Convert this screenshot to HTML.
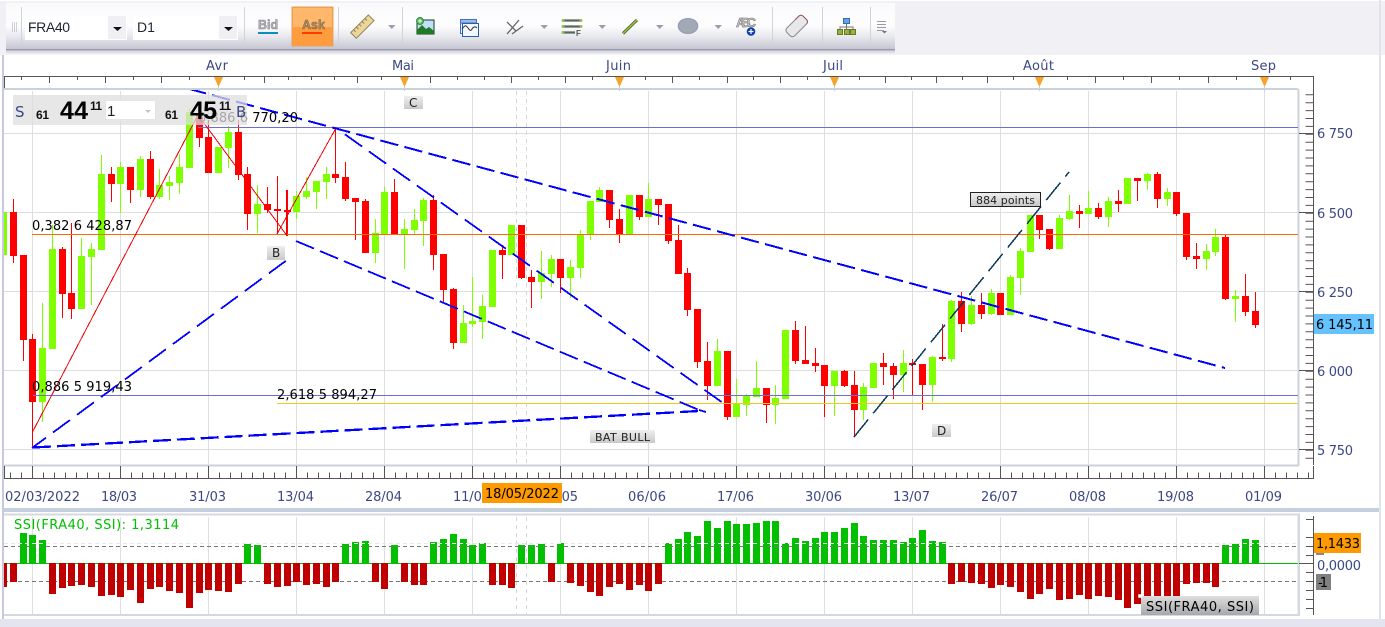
<!DOCTYPE html>
<html><head><meta charset="utf-8"><title>FRA40 D1</title>
<style>
html,body{margin:0;padding:0;background:#fff;width:1385px;height:627px;overflow:hidden}
svg{display:block}
text{font-family:"DejaVu Sans","Liberation Sans",sans-serif;font-size:13px;fill:#000}
.ax{fill:#3c4784}
.lb{font-size:10.5px;fill:#222}
</style></head><body>
<svg width="1385" height="627" viewBox="0 0 1385 627" xmlns="http://www.w3.org/2000/svg">
<defs>
<linearGradient id="tb" x1="0" y1="0" x2="0" y2="1"><stop offset="0" stop-color="#fafafc"/><stop offset=".5" stop-color="#fdfdfe"/><stop offset=".72" stop-color="#e9e9ef"/><stop offset="1" stop-color="#c6c6d2"/></linearGradient>
<linearGradient id="tag" x1="0" y1="0" x2="0" y2="1"><stop offset="0" stop-color="#efefef"/><stop offset="1" stop-color="#c8c8c8"/></linearGradient>
<linearGradient id="tip" x1="0" y1="0" x2="0" y2="1"><stop offset="0" stop-color="#dedede"/><stop offset="1" stop-color="#a8a8a8"/></linearGradient>
<clipPath id="plot"><rect x="4" y="90" width="1294" height="375"/></clipPath>
</defs>

<!-- page frame -->
<rect width="1385" height="627" fill="#fff"/>
<rect width="1385" height="55" fill="#f0f0f5"/>
<rect y="0" width="1385" height="1" fill="#fff"/>
<rect x="2" y="55" width="2" height="564" fill="#c8c8e0"/>
<rect x="0" y="619" width="1385" height="8" fill="#e4e4f0"/>
<rect x="1379" y="0" width="2" height="619" fill="#e2e2ea"/>
<rect x="4" y="508" width="1375" height="4" fill="#c5d0de"/>

<!-- toolbar -->
<rect x="6" y="50" width="889" height="3" fill="#dcdce4"/>
<rect x="6" y="3" width="889" height="46" fill="url(#tb)"/>
<rect x="6" y="49" width="889" height="1.5" fill="#9a9aac"/>
<path d="M12.5 22V32M14.5 22V32M16.5 22V32" stroke="#cfcfd8" stroke-width="1"/>
<path d="M21.5 7V46M244.5 7V46M338.5 7V46M402.5 7V46M772.5 7V46M822.5 7V46M870.5 7V46" stroke="#d2d2dc"/>
<rect x="25" y="16" width="102" height="24" fill="#fff"/>
<rect x="108" y="16" width="18" height="23" fill="#f0f0f4"/>
<path d="M113 27h9l-4.500 4z" fill="#111"/>
<text x="28" y="32" textLength="42" style="font-family:'Liberation Sans',sans-serif;font-size:14px;fill:#1c2430">FRA40</text>
<rect x="133" y="16" width="105" height="24" fill="#fff"/>
<rect x="219" y="16" width="18" height="23" fill="#f0f0f4"/>
<path d="M224 27h9l-4.500 4z" fill="#111"/>
<text x="137" y="32" style="font-family:'Liberation Sans',sans-serif;font-size:14px;fill:#1c2430">D1</text>
<text x="258" y="29" style="font-family:'Liberation Sans',sans-serif;font-size:12.500px;font-weight:bold;fill:#b4b4b8;stroke:#808088;stroke-width:.5">Bid</text>
<rect x="258" y="32" width="20" height="2" fill="#0b8cc4"/>
<rect x="292" y="7" width="41" height="39" fill="#ff9c3e" stroke="#e6a060"/>
<rect x="293" y="8" width="39" height="19" fill="#ffb76c"/>
<text x="302" y="29" style="font-family:'Liberation Sans',sans-serif;font-size:12.500px;font-weight:bold;fill:#b08a60;stroke:#7d6648;stroke-width:.5">Ask</text>
<rect x="302" y="32" width="20" height="2" fill="#ff3c00"/>
<!-- ruler icon -->
<g transform="rotate(-45 362 27)"><rect x="350" y="23" width="25" height="8" fill="#ecd69a" stroke="#8f8258"/><path d="M354 23v3M358 23v3M362 23v3M366 23v3M370 23v3" stroke="#8f8258"/></g>
<g fill="#9c9cb0"><path d="M388 25h7.500l-3.750 4zM540.500 25h7.500l-3.750 4zM598.500 25h7.500l-3.750 4zM656 25h7.500l-3.750 4zM714.500 25h7.500l-3.750 4z"/></g>
<!-- image icon -->
<rect x="417" y="20" width="17" height="14" fill="#bfe0f8" stroke="#123a22"/>
<path d="M417 34v-4l5-5 4 4 3-2 5 4v3z" fill="#1f7a28"/>
<circle cx="420" cy="21" r="3.600" fill="#5cb85c" stroke="#2a7a3a" stroke-width=".7"/>
<path d="M418.200 21h3.600M420 19.200v3.600" stroke="#fff"/>
<!-- window icon -->
<rect x="460.500" y="19.500" width="16" height="14" fill="#e8f0fb" stroke="#3f72c4"/>
<rect x="460.500" y="19.500" width="16" height="3.500" fill="#9cbcec" stroke="#3f72c4"/>
<rect x="462.500" y="23.500" width="16" height="13" fill="#f4f8fd" stroke="#2a5cae"/>
<path d="M462 29c3-4 4-4 6-1s3 3 4 1 3-3 5-1" fill="none" stroke="#333" stroke-width="1"/>
<!-- pitchfork -->
<path d="M507 34L519 20M512 34L523 26M507 22L516 31" fill="none" stroke="#666" stroke-width="1.300"/>
<!-- fib lines -->
<path d="M563 20.500H581M563 26.500H581M563 32.500H575" stroke="#5a6660" stroke-width="2.200"/>
<g fill="#8fc04a"><circle cx="563" cy="20.500" r="1.500"/><circle cx="581" cy="20.500" r="1.500"/><circle cx="563" cy="26.500" r="1.500"/><circle cx="581" cy="26.500" r="1.500"/><circle cx="563" cy="32.500" r="1.500"/></g>
<text x="576" y="36" style="font-family:'Liberation Sans',sans-serif;font-size:8px;font-weight:bold;fill:#555">F</text>
<!-- line -->
<path d="M623 33.500L637 20" stroke="#4a5a28" stroke-width="3"/><path d="M623 33.500L637 20" stroke="#9cc43c" stroke-width="1.500"/>
<!-- ellipse -->
<ellipse cx="688" cy="26" rx="9.800" ry="7.500" fill="#a2a8b4" stroke="#8c9ab0"/>
<!-- ABC -->
<text x="736" y="27" textLength="20" style="font-family:'Liberation Sans',sans-serif;font-size:13px;font-weight:bold;fill:#c8c8c8;stroke:#707070;stroke-width:.5">ABC</text>
<circle cx="751" cy="31.500" r="4.300" fill="#0a3fa8"/>
<path d="M748.500 31.500h5M751 29v5" stroke="#fff" stroke-width="1.200"/>
<!-- eraser -->
<g transform="rotate(-45 796 26)"><rect x="785" y="21" width="23" height="11" rx="3" fill="#e8e8ea" stroke="#8a8a8e"/><path d="M800 21h5a3 3 0 0 1 3 3v5a3 3 0 0 1-3 3" fill="none" stroke="#9a5a62"/></g>
<!-- org chart -->
<rect x="843.500" y="18.500" width="6" height="5" fill="#5aa4ee" stroke="#3a6aa8"/>
<path d="M846.500 24V27M840 29V27H853V29M846.500 27V29" fill="none" stroke="#777"/>
<rect x="837.500" y="29.500" width="5" height="5" fill="#9ab040" stroke="#667a24"/>
<rect x="844.500" y="29.500" width="5" height="5" fill="#9ab040" stroke="#667a24"/>
<rect x="850.500" y="29.500" width="5" height="5" fill="#9ab040" stroke="#667a24"/>
<!-- overflow menu -->
<path d="M877 21.500H886M877 24.500H886M877 27.500H886M877 30.500H884" stroke="#9a9aa6"/>
<path d="M882 31h5l-2.500 2.500z" fill="#707080"/>

<!-- month labels -->
<g class="months">
<text class="ax" x="206" y="70" textLength="22">Avr</text>
<text class="ax" x="392" y="70" textLength="22">Mai</text>
<text class="ax" x="606" y="70" textLength="25">Juin</text>
<text class="ax" x="823" y="70" textLength="20">Juil</text>
<text class="ax" x="1023" y="70" textLength="31">Août</text>
<text class="ax" x="1251" y="70" textLength="25">Sep</text>
</g>

<!-- top ruler -->
<path d="M4.500 90V76.500H1313.500V89" fill="none" stroke="#555"/>
<path d="M21.500 77v3M49.500 77v6M77.500 77v3M105.500 77v6M133.500 77v3M161.500 77v6M189.500 77v3M244.500 77v3M264.500 77v6M288.500 77v3M311.500 77v3M334.500 77v3M357.500 77v6M381.500 77v3M430.500 77v6M457.500 77v3M484.500 77v3M511.500 77v6M538.500 77v3M565.500 77v6M592.500 77v3M645.500 77v3M672.500 77v6M699.500 77v3M727.500 77v6M753.500 77v3M780.500 77v6M807.500 77v3M859.500 77v3M885.500 77v6M911.500 77v3M936.500 77v6M962.500 77v3M987.500 77v6M1013.500 77v3M1067.500 77v3M1095.500 77v6M1123.500 77v3M1151.500 77v6M1179.500 77v3M1208.500 77v6M1236.500 77v3M1290.500 77v3" stroke="#555"/>
<g fill="#f7a329"><path d="M214 77h9l-4.500 10zM400 77h9l-4.500 10zM615 77h9l-4.500 10zM830 77h9l-4.500 10zM1035 77h9l-4.500 10zM1260 77h9l-4.500 10z"/></g>
<path d="M218.500 87v4M404.500 87v4M619.500 87v4M834.500 87v4M1039.500 87v4M1264.500 87v4" stroke="#bcc8dc"/>

<!-- main plot frame -->
<path d="M4 89H1298M1298.500 89V466M4 465.500H1299" stroke="#ccd2da" stroke-width="2" fill="none"/>

<!-- grid -->
<path d="M32.500 91V465M120.500 91V465M208.500 91V465M296.500 91V465M384.500 91V465M472.500 91V465M560.500 91V465M648.500 91V465M736.500 91V465M824.500 91V465M912.500 91V465M1000.500 91V465M1088.500 91V465M1176.500 91V465M1264.500 91V465" stroke="#dedede"/>
<path d="M4 133.500H1298M4 212.500H1298M4 291.500H1298M4 370.500H1298M4 449.500H1298" stroke="#dedede"/>
<path d="M516.500 91V465M526.500 91V465" stroke="#d6d6d6" stroke-dasharray="4 4"/>

<!-- candles: green -->
<g clip-path="url(#plot)" fill="none">
<path stroke="#7fff00" stroke-width="1" d="M42.500 303V422M52.500 225V349M81.500 238V309M91.500 243V305M101.500 155V250M120.500 162V213M140.500 156V197M159.500 169V199M169.500 176V200M179.500 154V194M189.500 108V168M228.500 126V168M257.500 185V233M296.500 191V219M306.500 177V199M316.500 181V209M326.500 167V199M375.500 219V263M384.500 187V234M404.500 219V269M414.500 209V234M423.500 198V246M463.500 305V343M472.500 277V327M482.500 295V339M541.500 251V299M551.500 255V287M570.500 260V298M580.500 230V278M590.500 201V240M599.500 187V202M648.500 183V217M717.500 339V386M736.500 379V417M746.500 394V416M756.500 361V397M775.500 385V424M834.500 371V416M863.500 383V420M903.500 350V392M932.500 356V402M951.500 300V362M971.500 296V325M991.500 289V315M1010.500 275V315M1020.500 248V295M1059.500 215V249M1069.500 195V220M1088.500 191V214M1108.500 197V227M1147.500 173V190M1167.500 188V206M1206.500 244V270M1215.500 229V256M1235.500 290V322"/>
<path stroke="#7fff00" stroke-width="7" d="M42.500 348V402M52.500 249V349M81.500 256V309M91.500 249V257M101.500 174V250M120.500 167V184M140.500 159V190M159.500 185V197M169.500 182V186M179.500 167V183M189.500 112V168M218.500 147V173M228.500 132V148M257.500 204V214M296.500 196V212M306.500 191V197M316.500 181V192M326.500 174V182M375.500 233V253M384.500 192V234M404.500 229V234M414.500 220V230M423.500 200V221M463.500 323V343M472.500 321V324M482.500 306V322M492.500 250V307M511.500 225V255M541.500 273V282M551.500 259V274M570.500 267V278M580.500 235V268M590.500 201V235M599.500 190V202M629.500 195V234M648.500 199V217M717.500 351V386M736.500 404V417M746.500 396V405M756.500 388V397M775.500 398V405M785.500 330V399M834.500 371V386M863.500 387V410M873.500 363V388M903.500 363V375M932.500 357V385M951.500 301V359M971.500 305V324M991.500 293V314M1010.500 277V315M1020.500 251V278M1030.500 215V252M1059.500 218V249M1069.500 211V219M1088.500 208V214M1108.500 201V217M1127.500 178V204M1147.500 174V181M1167.500 192V199M1206.500 251V259M1215.500 237V252M1235.500 296V299"/>
<path stroke="#7fff00" stroke-width="3" d="M5.500 212V255"/>
<!-- candles: red -->
<path stroke="#ff0000" stroke-width="1" d="M13.500 199V263M23.500 255V361M32.500 334V448M62.500 247V318M71.500 223V319M111.500 167V202M130.500 167V203M150.500 151V199M199.500 115V147M208.500 120V173M238.500 120V180M247.500 167V230M267.500 187V213M277.500 176V234M287.500 190V236M335.500 128V183M345.500 162V201M355.500 198V240M365.500 199V253M394.500 179V234M433.500 195V270M443.500 254V303M453.500 288V349M502.500 245V279M521.500 225V279M531.500 270V308M560.500 259V293M609.500 190V228M619.500 209V243M639.500 195V220M658.500 199V225M668.500 204V244M678.500 225V274M687.500 268V316M697.500 309V368M707.500 342V400M727.500 351V420M766.500 388V423M795.500 321V364M805.500 326V364M815.500 348V372M824.500 365V417M844.500 370V387M854.500 371V437M883.500 353V385M893.500 363V399M912.500 359V395M922.500 364V410M942.500 324V361M961.500 292V332M981.500 293V319M1000.500 293V315M1039.500 215V239M1049.500 229V250M1079.500 205V228M1098.500 203V219M1118.500 190V212M1137.500 178V201M1157.500 172V208M1176.500 192V216M1186.500 213V260M1196.500 243V269M1225.500 235V300M1245.500 274V316M1255.500 292V328"/>
<path stroke="#ff0000" stroke-width="7" d="M13.500 212V256M23.500 255V340M32.500 339V402M62.500 249V294M71.500 293V309M111.500 174V184M130.500 167V190M150.500 159V197M199.500 115V138M208.500 137V173M238.500 132V175M247.500 174V214M267.500 204V210M277.500 209V211M287.500 210V212M335.500 174V178M345.500 177V199M355.500 198V202M365.500 201V253M394.500 192V234M433.500 200V255M443.500 254V290M453.500 289V343M502.500 250V255M521.500 225V278M531.500 277V282M560.500 259V278M609.500 190V220M619.500 219V234M639.500 195V217M658.500 199V205M668.500 204V241M678.500 240V274M687.500 273V310M697.500 309V362M707.500 361V386M727.500 351V417M766.500 388V405M795.500 330V361M805.500 360V364M815.500 363V366M824.500 365V386M844.500 371V386M854.500 385V410M883.500 363V367M893.500 366V375M912.500 363V365M922.500 364V385M942.500 357V359M961.500 301V324M981.500 305V314M1000.500 293V315M1039.500 215V230M1049.500 229V249M1079.500 211V214M1098.500 208V217M1118.500 201V204M1137.500 178V181M1157.500 174V199M1176.500 192V214M1186.500 213V257M1196.500 256V259M1225.500 237V299M1245.500 296V312M1255.500 311V325"/>

<!-- horizontal levels -->
<path d="M198 127.500H1298" stroke="#6e6ed0"/>
<path d="M32 234.500H1298" stroke="#ff6a00"/>
<path d="M32 395.500H1298" stroke="#6e6ed0"/>
<path d="M277 403.500H1298" stroke="#f5c820"/>

<!-- red zigzag -->
<path d="M32.500 395V448M32.500 432L198 115L286.500 235M277 234L336 128M286.500 190V236" stroke="#f00000" fill="none" stroke-width="1" shape-rendering="crispEdges"/>

<!-- blue dashed -->
<g fill="none" stroke="#0000ff" shape-rendering="crispEdges">
<path d="M32 448L287 260" stroke-width="1.800" stroke-dasharray="21 8.800" stroke-dashoffset="3.700"/>
<path d="M33 447.500L699 411" stroke-width="2.300" stroke-dasharray="18 6"/>
<path d="M188 88.600L1225 368" stroke-width="2" stroke-dasharray="18.500 6.400"/>
<path d="M336 128L723 403" stroke-width="1.800" stroke-dasharray="21 8.400" stroke-dashoffset="18.400"/>
<path d="M296 241L699 410" stroke-width="1.800" stroke-dasharray="19.500 6.500"/>
<path d="M699 410L706 412" stroke-width="1.800"/>
</g>
<path d="M854 437L1069 172" fill="none" stroke="#0a3a5c" stroke-width="1.500" stroke-dasharray="22.500 8" shape-rendering="crispEdges"/>
</g>

<!-- chart labels -->
<text x="32" y="230" textLength="100">0,382 6 428,87</text>
<text x="32" y="391" textLength="100">0,886 5 919,43</text>
<text x="277" y="399" textLength="100">2,618 5 894,27</text>
<text x="198" y="122" textLength="100">0,886 6 770,20</text>

<!-- tags -->
<g stroke="none">
<rect x="404" y="96" width="19" height="13" fill="url(#tag)"/><text x="409" y="107" class="lb" style="font-size:12px">C</text>
<rect x="267" y="246" width="18" height="14" fill="url(#tag)"/><text x="272" y="257" class="lb" style="font-size:12px">B</text>
<rect x="932" y="424" width="19" height="13" fill="url(#tag)"/><text x="937" y="435" class="lb" style="font-size:12px">D</text>
<rect x="590" y="430" width="65" height="13" fill="url(#tag)"/><text x="595" y="441" class="lb" style="font-size:11px" textLength="55">BAT BULL</text>
</g>
<rect x="970.500" y="192.500" width="70" height="14" fill="url(#tag)" stroke="#222"/>
<text x="976" y="204" class="lb" style="font-size:11px" textLength="59">884 points</text>

<!-- bid/ask panel -->
<rect x="13" y="95" width="234" height="30" fill="#dedede" fill-opacity=".74"/>
<rect x="105.500" y="100.500" width="50" height="19" fill="#fff" stroke="#e4e4e4"/>
<path d="M145 110h6l-3 3z" fill="#c4c4c4"/>
<text x="15" y="117" class="ax" style="font-size:15px">S</text>
<text x="36" y="119" style="font-family:'Liberation Sans',sans-serif;font-size:12px;font-weight:bold;fill:#111" textLength="13">61</text>
<text x="60" y="119" style="font-family:'Liberation Sans',sans-serif;font-size:25px;font-weight:bold;fill:#000" textLength="28">44</text>
<text x="90" y="110" style="font-family:'Liberation Sans',sans-serif;font-size:12px;font-weight:bold;fill:#111" textLength="12">11</text>
<text x="107" y="116" style="font-family:'Liberation Sans',sans-serif;font-size:15px;fill:#222">1</text>
<text x="165" y="119" style="font-family:'Liberation Sans',sans-serif;font-size:12px;font-weight:bold;fill:#111" textLength="13">61</text>
<text x="190" y="119" style="font-family:'Liberation Sans',sans-serif;font-size:25px;font-weight:bold;fill:#000" textLength="27">45</text>
<text x="219" y="110" style="font-family:'Liberation Sans',sans-serif;font-size:12px;font-weight:bold;fill:#111" textLength="12">11</text>
<text x="236" y="117" class="ax" style="font-size:15px">B</text>

<!-- right axis -->
<path d="M1313.500 89V465" stroke="#555"/>
<path d="M1309.500 94.300V465" stroke="#555" stroke-width="8" stroke-dasharray="1 6.900" fill="none"/>
<path d="M1299 133.500H1313M1299 212.500H1313M1299 291.500H1313M1299 370.500H1313M1299 449.500H1313" stroke="#555"/>
<text class="ax" x="1317" y="138" textLength="36">6 750</text>
<text class="ax" x="1317" y="218" textLength="36">6 500</text>
<text class="ax" x="1317" y="297" textLength="36">6 250</text>
<text class="ax" x="1317" y="376" textLength="36">6 000</text>
<text class="ax" x="1317" y="455" textLength="36">5 750</text>
<rect x="1314" y="314" width="60" height="20" fill="#66c2ff"/>
<text x="1316" y="329" textLength="57">6 145,11</text>

<!-- bottom ruler -->
<path d="M4.500 466V478.500H1313.500V466" fill="none" stroke="#555"/>
<path d="M10 475.500H1313" stroke="#555" stroke-width="6" stroke-dasharray="1 10" fill="none"/>
<path d="M32.500 466V478M120.500 466V478M208.500 466V478M296.500 466V478M384.500 466V478M472.500 466V478M560.500 466V478M648.500 466V478M736.500 466V478M824.500 466V478M912.500 466V478M1000.500 466V478M1088.500 466V478M1176.500 466V478M1264.500 466V478" stroke="#555"/>

<!-- date labels -->
<text class="ax" x="5" y="501" textLength="75">02/03/2022</text>
<text class="ax" x="101" y="501" textLength="36">18/03</text>
<text class="ax" x="189" y="501" textLength="37">31/03</text>
<text class="ax" x="277" y="501" textLength="37">13/04</text>
<text class="ax" x="365" y="501" textLength="37">28/04</text>
<text class="ax" x="453" y="501" textLength="37">11/05</text>
<text class="ax" x="541" y="501" textLength="37">24/05</text>
<text class="ax" x="628" y="501" textLength="38">06/06</text>
<text class="ax" x="717" y="501" textLength="37">17/06</text>
<text class="ax" x="805" y="501" textLength="37">30/06</text>
<text class="ax" x="893" y="501" textLength="37">13/07</text>
<text class="ax" x="981" y="501" textLength="37">26/07</text>
<text class="ax" x="1069" y="501" textLength="37">08/08</text>
<text class="ax" x="1157" y="501" textLength="37">19/08</text>
<text class="ax" x="1245" y="501" textLength="37">01/09</text>
<rect x="482" y="483" width="80" height="20" fill="#ff9900"/>
<text x="485" y="498" textLength="74">18/05/2022</text>

<!-- indicator panel -->
<path d="M4 514.500H1299V615H4" fill="none" stroke="#d4d8e0" stroke-width="2"/>
<path d="M1298.500 514V616" stroke="#d4d8e0" stroke-width="2"/>
<path d="M32.500 517V615M120.500 517V615M208.500 517V615M296.500 517V615M384.500 517V615M472.500 517V615M560.500 517V615M648.500 517V615M736.500 517V615M824.500 517V615M912.500 517V615M1000.500 517V615M1088.500 517V615M1176.500 517V615M1264.500 517V615" stroke="#dedede"/>
<path d="M516.500 517V615M526.500 517V615" stroke="#d6d6d6" stroke-dasharray="4 4"/>
<path d="M4 581.500H1298" stroke="#777" stroke-dasharray="4 3"/>
<path d="M4 563.500H1298" stroke="#00c000"/>
<path fill="none" stroke="#00c000" stroke-width="7" d="M23.500 563V533M32.500 563V535M42.500 563V540M247.500 563V544M257.500 563V545M345.500 563V544M355.500 563V542M365.500 563V541M394.500 563V545M433.500 563V542M443.500 563V539M453.500 563V534M463.500 563V539M472.500 563V545M482.500 563V543M521.500 563V545M531.500 563V545M541.500 563V544M560.500 563V543M668.500 563V543M678.500 563V539M687.500 563V532M697.500 563V536M707.500 563V521M717.500 563V528M727.500 563V521M736.500 563V524M746.500 563V524M756.500 563V523M766.500 563V521M775.500 563V521M785.500 563V543M795.500 563V538M805.500 563V541M815.500 563V538M824.500 563V532M834.500 563V532M844.500 563V528M854.500 563V523M863.500 563V536M873.500 563V540M883.500 563V540M893.500 563V540M903.500 563V542M912.500 563V538M922.500 563V530M932.500 563V541M942.500 563V542M1225.500 563V545M1235.500 563V544M1245.500 563V539M1255.500 563V540"/>
<path fill="none" stroke="#c00000" stroke-width="7" d="M13.500 563V582M52.500 563V594M62.500 563V588M71.500 563V586M81.500 563V585M91.500 563V587M101.500 563V596M111.500 563V595M120.500 563V597M130.500 563V590M140.500 563V603M150.500 563V589M159.500 563V587M169.500 563V591M179.500 563V593M189.500 563V608M199.500 563V593M208.500 563V590M218.500 563V591M228.500 563V592M238.500 563V584M267.500 563V584M277.500 563V587M287.500 563V586M296.500 563V582M306.500 563V585M316.500 563V584M326.500 563V587M335.500 563V582M375.500 563V582M384.500 563V589M404.500 563V582M414.500 563V585M423.500 563V585M492.500 563V585M502.500 563V585M511.500 563V588M551.500 563V582M570.500 563V583M580.500 563V586M590.500 563V592M599.500 563V596M609.500 563V587M619.500 563V584M629.500 563V590M639.500 563V585M648.500 563V591M658.500 563V584M951.500 563V584M961.500 563V582M971.500 563V583M981.500 563V584M991.500 563V588M1000.500 563V585M1010.500 563V587M1020.500 563V592M1030.500 563V599M1039.500 563V594M1049.500 563V589M1059.500 563V600M1069.500 563V599M1079.500 563V595M1088.500 563V599M1098.500 563V596M1108.500 563V597M1118.500 563V600M1127.500 563V608M1137.500 563V604M1147.500 563V600M1157.500 563V600M1167.500 563V600M1176.500 563V600M1186.500 563V584M1196.500 563V583M1206.500 563V583M1215.500 563V587"/>
<path fill="none" stroke="#c00000" stroke-width="3" d="M5.500 563V587"/>
<path d="M4 546.500H1298" stroke="#777" stroke-dasharray="4 3"/>
<path d="M4 543.500H1298" stroke="#e8e8e8" stroke-dasharray="4 3"/>
<text x="14" y="529" textLength="165" style="fill:#00c000">SSI(FRA40, SSI): 1,3114</text>
<!-- indicator axis -->
<path d="M1313.500 516V615" stroke="#555"/>
<path d="M1299 563.500H1313" stroke="#555"/>
<path d="M1306 519.500h7M1306 537.500h7M1306 546.500h7M1306 555.500h7M1306 572.500h7M1306 581.500h7M1306 590.500h7M1306 599.500h7M1306 608.500h7" stroke="#555"/>
<rect x="1316" y="553" width="8" height="2" fill="#888"/>
<rect x="1314" y="533" width="47" height="20" fill="#ff9900"/>
<text x="1316" y="548" textLength="44">1,1433</text>
<text class="ax" x="1317" y="570" textLength="44">0,0000</text>
<rect x="1316" y="574" width="15" height="16" fill="#808080"/>
<text x="1318" y="587" textLength="10">-1</text>
<!-- tooltip -->
<rect x="1141" y="596" width="118" height="19" fill="url(#tip)"/>
<rect x="1138.500" y="594.500" width="3" height="3" fill="#fff" stroke="#fff" stroke-width=".5"/>
<text x="1146" y="611" textLength="108">SSI(FRA40, SSI)</text>
</svg>
</body></html>
